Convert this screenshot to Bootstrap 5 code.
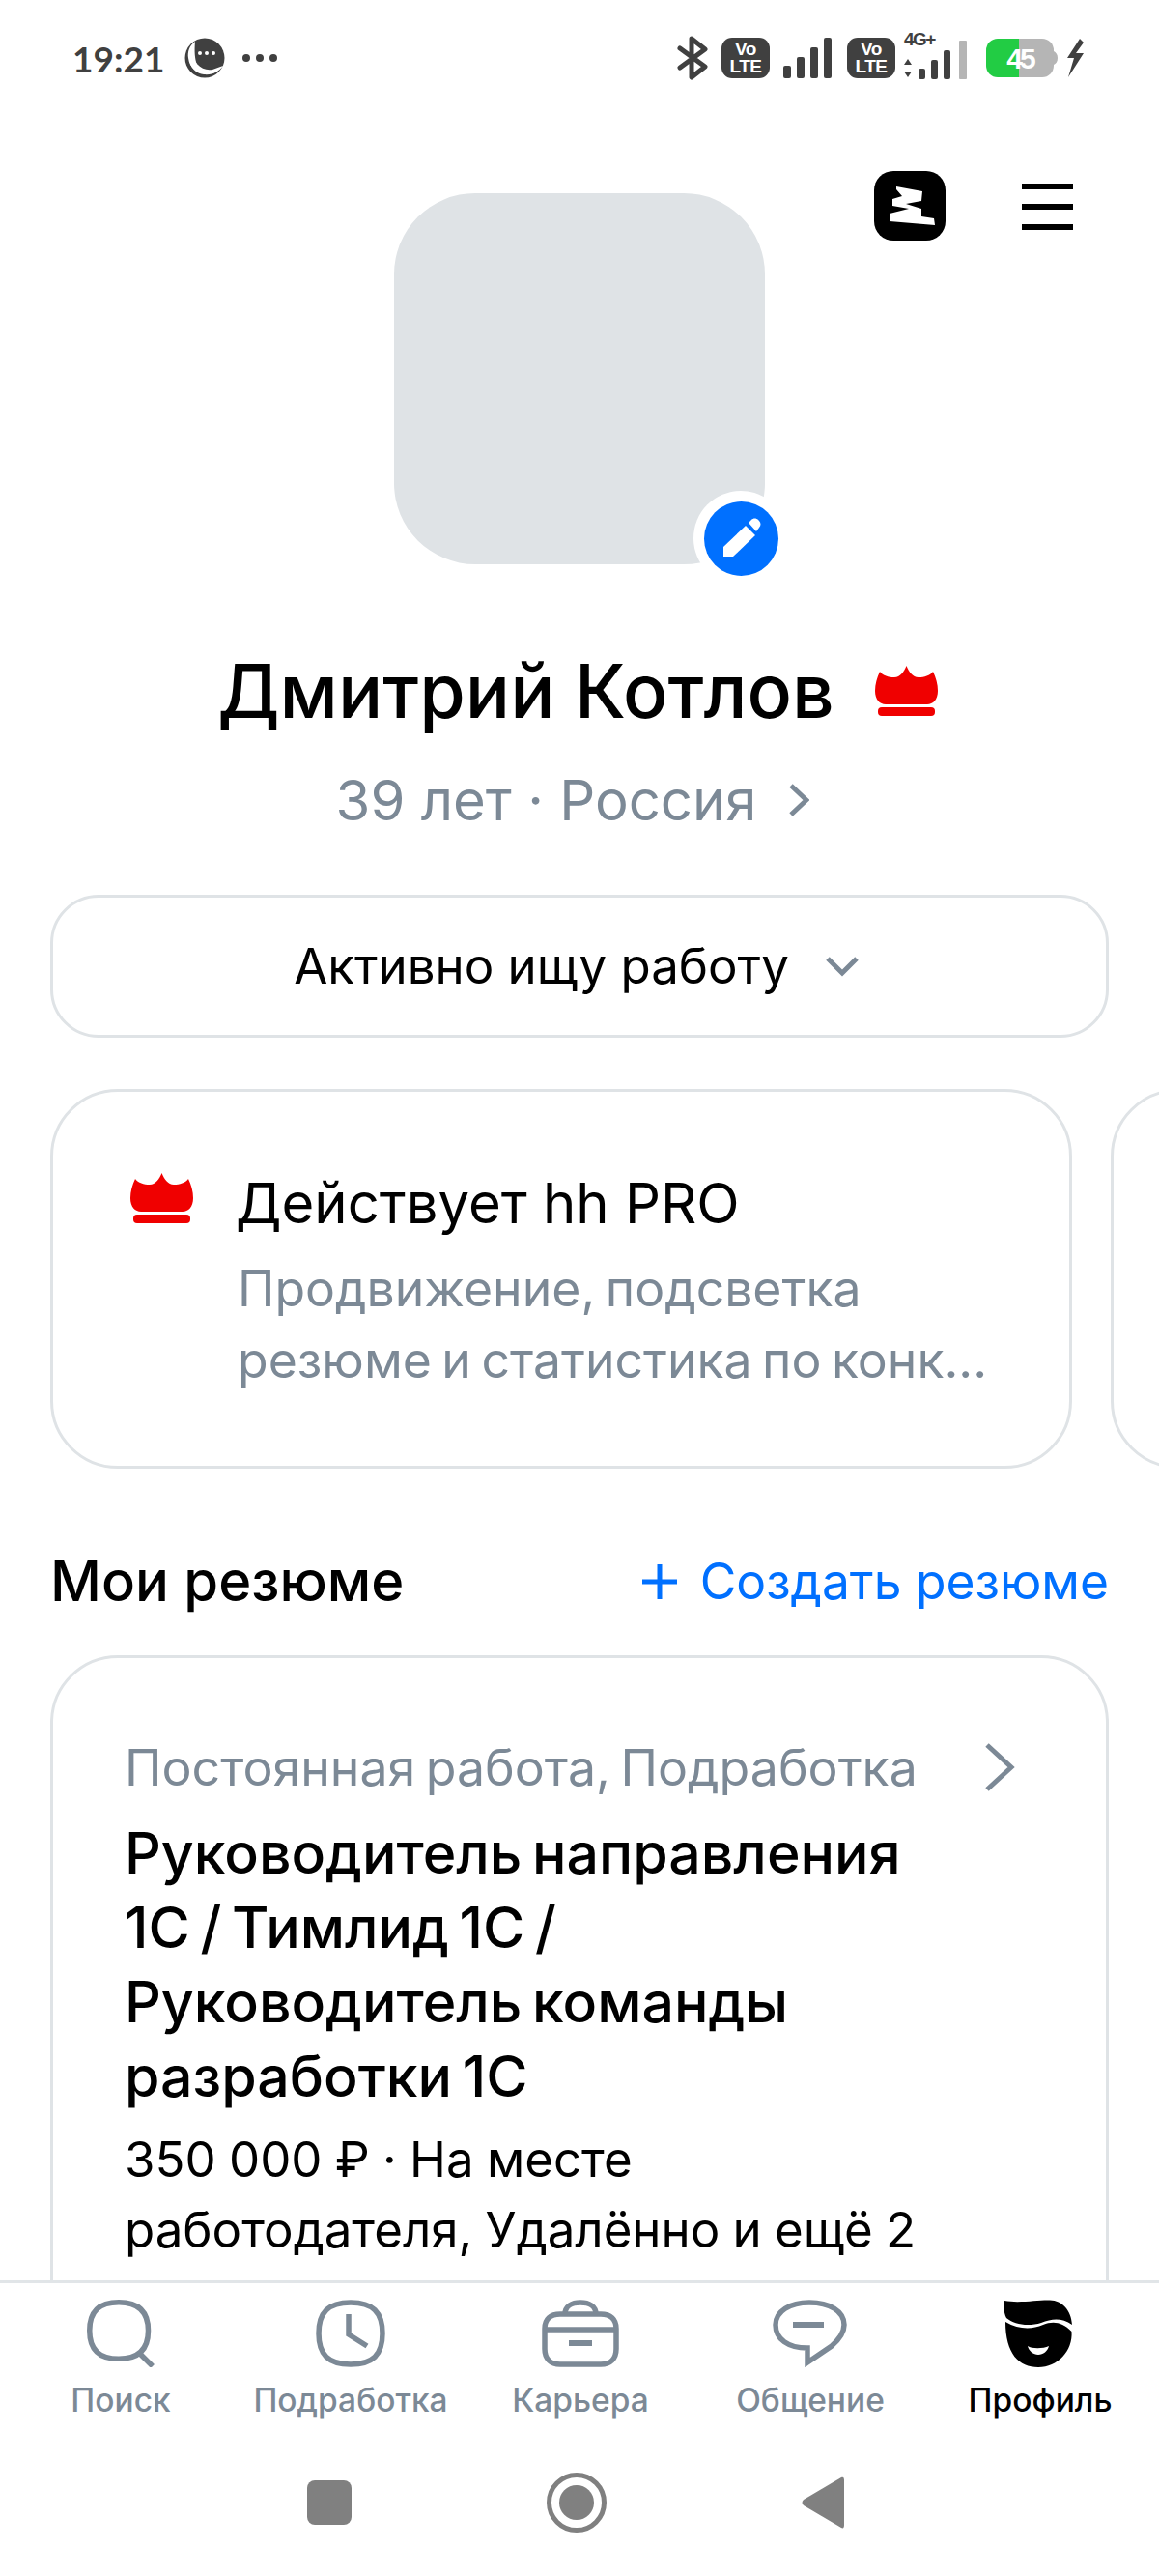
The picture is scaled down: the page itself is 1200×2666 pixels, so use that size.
<!DOCTYPE html>
<html lang="ru">
  <head>
    <meta charset="UTF-8" />
    <meta name="viewport" content="width=device-width, initial-scale=1.0" />
    <title>Профиль</title>
    <link
      rel="stylesheet"
      href="https://cdn.jsdelivr.net/npm/bootstrap@5.3.0/dist/css/bootstrap.min.css"
    />
    <style>
      body {
        height: 100vh;
        overflow: hidden;
        background: #fff;
        color: #000;
        font-family: Inter, "Noto Sans", sans-serif;
      }
      .status-bar {
        height: 120px;
        padding: 0 77px 0 75px;
        color: #404040;
      }
      .status-time {
        margin-right: 20px;
        font-family: Lato, sans-serif;
        font-weight: 700;
        font-size: 37px;
        line-height: 1;
      }
      .status-dots {
        gap: 6px;
        margin-left: 17px;
      }
      .status-dots i {
        width: 8px;
        height: 8px;
        border-radius: 50%;
        background: #404040;
      }
      .status-icons {
        gap: 14px;
      }
      .volte {
        width: 50px;
        height: 42px;
        border-radius: 11px;
        background: #404040;
        color: #fff;
        font-family: "Liberation Sans", sans-serif;
        font-weight: 700;
        font-size: 19px;
        line-height: 18px;
        letter-spacing: -0.5px;
        text-align: center;
        padding-top: 3px;
      }
      .net-wrap {
        width: 68px;
        height: 48px;
        margin-left: -5px;
      }
      .net-label {
        top: -5px;
        left: 0;
        font-family: "Liberation Sans", sans-serif;
        font-weight: 700;
        font-size: 19px;
        line-height: 1;
        letter-spacing: -1.5px;
      }
      .battery-wrap {
        margin-left: 3px;
      }
      .battery {
        width: 70px;
        height: 40px;
        border-radius: 12px;
        background: linear-gradient(90deg, #22cc44 0, #22cc44 34px, #b5b5b5 34px);
        color: #fff;
        font-family: "Liberation Sans", sans-serif;
        font-weight: 700;
        font-size: 30px;
        letter-spacing: -3px;
      }
      .bolt-icon {
        margin-left: -6px;
      }
      .profile-top {
        display: grid;
        grid-template-columns: 1fr 384px 1fr;
        padding-top: 57px;
      }
      .top-actions {
        gap: 79px;
        padding-right: 89px;
      }
      .burger {
        width: 53px;
        gap: 15px;
        margin-top: 13px;
      }
      .burger i {
        display: block;
        height: 6px;
        background: #000;
      }
      .photo-box {
        width: 384px;
        height: 384px;
        margin-top: 23px;
        border-radius: 84px;
        background: #dfe3e6;
      }
      .edit-ring {
        right: -24px;
        bottom: -22px;
        width: 98px;
        height: 98px;
        background: #fff;
      }
      .edit-dot {
        width: 77px;
        height: 77px;
        background: #0070ff;
      }
      .person-name {
        margin: 85px 0 0;
        padding-right: 4px;
        gap: 42px;
        font-size: 77px;
        font-weight: 500;
        line-height: 92px;
      }
      .person-sub {
        margin-top: 32px;
        padding-right: 14px;
        gap: 33px;
        color: #7c8996;
        font-size: 58px;
        line-height: 70px;
      }
      .state-btn {
        height: 148px;
        margin: 63px 52px 0;
        padding-right: 6px;
        gap: 37px;
        border: 3px solid #dfe3e6;
        border-radius: 50px;
        font-size: 51px;
      }
      .promo-row {
        gap: 40px;
        margin-top: 53px;
        padding-left: 52px;
      }
      .promo-box {
        flex: 0 0 1058px;
        height: 393px;
        padding: 84px 0 0 80px;
        gap: 44px;
        border: 3px solid #dfe3e6;
        border-radius: 70px;
      }
      .promo-title {
        font-size: 58px;
        line-height: 62px;
        margin-bottom: 20px;
      }
      .promo-text {
        margin-left: 2px;
        color: #7c8996;
        font-size: 51.700px;
        line-height: 74px;
        word-spacing: -4px;
        white-space: nowrap;
      }
      .resume-head {
        margin: 78px 52px 0;
      }
      .resume-head h2 {
        margin: 0;
        font-size: 58px;
        font-weight: 500;
      }
      .resume-add {
        gap: 24px;
        color: #0070ff;
        font-size: 51.500px;
        text-decoration: none;
      }
      .resume-box {
        margin: 38px 52px 0;
        height: 900px;
        padding: 83px 94px 0 74px;
        border: 3px solid #dfe3e6;
        border-radius: 70px;
      }
      .resume-kind {
        color: #7c8996;
        font-size: 51.800px;
        line-height: 60px;
        word-spacing: -4px;
      }
      .resume-title {
        margin: 20px 0 0;
        font-size: 59px;
        font-weight: 500;
        line-height: 77px;
        word-spacing: -5px;
      }
      .resume-meta {
        margin-top: 11px;
        font-size: 51px;
        line-height: 73px;
        word-spacing: -1px;
      }
      .tab-bar {
        height: 157px;
        padding: 17px 6px 0;
        border-top: 3px solid #e1e5e8;
        background: #fff;
      }
      .tab-item {
        flex: 0 0 238px;
        color: #7c8996;
        font-size: 33.500px;
        font-weight: 500;
        line-height: 40px;
        text-decoration: none;
      }
      .tab-item svg {
        margin-bottom: 14px;
      }
      .tab-item.is-on {
        color: #000;
      }
      .sys-nav {
        height: 149px;
        padding: 0 0 3px 318px;
        gap: 202px;
      }
    </style>
  </head>
  <body class="d-flex flex-column">
    <main class="flex-grow-1 overflow-hidden">
      <div class="status-bar d-flex align-items-center justify-content-between">
        <div class="d-flex align-items-center">
          <span class="status-time">19:21</span>
          <svg width="44" height="42" viewBox="0 0 44 42">
            <circle cx="22" cy="21" r="20.5" fill="#404040" />
            <path d="M8 11C3 22 7 36 21 38C30 39 37 35 41 29L30 33C19 35 9 26 8 11Z" fill="#fff" />
            <path d="M12 4C6 8 4 15 5 21C6 31 14 37 23 37C15 34 10 25 12 4Z" fill="#fff" />
            <circle cx="17" cy="16" r="2" fill="#fff" />
            <circle cx="24" cy="16" r="2" fill="#fff" />
            <circle cx="31" cy="16" r="2" fill="#fff" />
          </svg>
          <div class="status-dots d-flex">
            <i></i><i></i><i></i>
          </div>
        </div>
        <div class="status-icons d-flex align-items-center">
          <svg width="32" height="46" viewBox="0 0 32 46" fill="none" stroke="#404040" stroke-width="5" stroke-linecap="round" stroke-linejoin="round">
            <path d="M3 13L29 32L15 43V3L29 14L3 33" />
          </svg>
          <div class="volte">Vo<br />LTE</div>
          <svg width="52" height="42" viewBox="0 0 52 42" fill="#404040">
            <rect x="0" y="29" width="8" height="13" rx="2" />
            <rect x="14" y="20" width="8" height="22" rx="2" />
            <rect x="28" y="10" width="8" height="32" rx="2" />
            <rect x="42" y="0" width="8" height="42" rx="2" />
          </svg>
          <div class="volte">Vo<br />LTE</div>
          <div class="net-wrap position-relative">
            <span class="net-label position-absolute">4G+</span>
            <svg class="position-absolute bottom-0 start-0" width="68" height="42" viewBox="0 0 68 42" fill="#404040">
              <path d="M4 19L8 25H0Z" />
              <path d="M4 38L0 32H8Z" />
              <rect x="15" y="29" width="7" height="11" rx="2" />
              <rect x="28" y="20" width="7" height="20" rx="2" />
              <rect x="41" y="10" width="7" height="30" rx="2" />
              <rect x="57" y="0" width="8" height="40" rx="1" fill="#b5b5b5" />
            </svg>
          </div>
          <div class="battery-wrap d-flex align-items-center">
            <div class="battery d-flex align-items-center justify-content-center">45</div>
            <svg width="4" height="14" viewBox="0 0 4 14"><path d="M0 0C2 1 4 3 4 7C4 11 2 13 0 14Z" fill="#b5b5b5" /></svg>
          </div>
          <svg class="bolt-icon" width="20" height="40" viewBox="0 0 20 40" fill="#404040">
            <path d="M15 0L2 20H9L3 40L19 15H11L19 4Z" />
          </svg>
        </div>
      </div>

      <div class="profile-top">
        <div></div>
        <div class="photo-box position-relative">
          <div class="edit-ring position-absolute rounded-circle d-flex align-items-center justify-content-center">
            <div class="edit-dot rounded-circle">
              <svg width="77" height="77" viewBox="0 0 77 77" fill="#fff">
                <path d="M20 47L43 25L53 35L30 57H20Z" />
                <path d="M46 22L49 19C51 17 54 17 56 19L57 20C59 22 59 25 57 27L54 31Z" />
              </svg>
            </div>
          </div>
        </div>
        <div class="top-actions d-flex justify-content-end align-items-start">
          <svg width="74" height="72" viewBox="0 0 74 72">
            <rect width="74" height="72" rx="20" fill="#000" />
            <path d="M23 16L50 21L49 31L33 34L49 39V47L62 49L63 56L16 52V44L36 39L19 36V29L29 26L23 19Z" fill="#fff" />
          </svg>
          <div class="burger d-flex flex-column"><i></i><i></i><i></i></div>
        </div>
      </div>

      <h1 class="person-name d-flex justify-content-center align-items-center">
        Дмитрий Котлов
        <svg width="65" height="52" viewBox="0 0 65 52" fill="#f00000">
          <path d="M32.5 0C35 6 39 12 45 12C51 12 57 10 60 6C63 12 65 19 65 26C65 35 60 40 54 40H11C5 40 0 35 0 26C0 19 2 12 5 6C8 10 14 12 20 12C26 12 30 6 32.5 0Z" />
          <rect x="3" y="43" width="59" height="9" rx="4" />
        </svg>
      </h1>
      <div class="person-sub d-flex justify-content-center align-items-center">
        39 лет · Россия
        <svg width="22" height="36" viewBox="0 0 22 36" fill="none" stroke="#7c8996" stroke-width="5">
          <path d="M3 3L19 18L3 33" />
        </svg>
      </div>

      <div class="state-btn d-flex justify-content-center align-items-center">
        Активно ищу работу
        <svg width="36" height="22" viewBox="0 0 36 22" fill="none" stroke="#7c8996" stroke-width="5">
          <path d="M3 3L18 18L33 3" />
        </svg>
      </div>

      <div class="promo-row d-flex overflow-hidden">
        <div class="promo-box d-flex">
          <svg class="flex-shrink-0" width="65" height="52" viewBox="0 0 65 52" fill="#f00000">
            <path d="M32.5 0C35 6 39 12 45 12C51 12 57 10 60 6C63 12 65 19 65 26C65 35 60 40 54 40H11C5 40 0 35 0 26C0 19 2 12 5 6C8 10 14 12 20 12C26 12 30 6 32.5 0Z" />
            <rect x="3" y="43" width="59" height="9" rx="4" />
          </svg>
          <div>
            <div class="promo-title">Действует hh PRO</div>
            <div class="promo-text">Продвижение, подсветка<br />резюме и статистика по конк...</div>
          </div>
        </div>
        <div class="promo-box"></div>
      </div>

      <div class="resume-head d-flex justify-content-between align-items-center">
        <h2>Мои резюме</h2>
        <a class="resume-add d-flex align-items-center" href="#">
          <svg width="36" height="36" viewBox="0 0 36 36" fill="none" stroke="#0070ff" stroke-width="5">
            <path d="M18 0V36M0 18H36" />
          </svg>
          Создать резюме
        </a>
      </div>

      <div class="resume-box">
        <div class="d-flex justify-content-between align-items-center">
          <div class="resume-kind">Постоянная работа, Подработка</div>
          <svg width="32" height="52" viewBox="0 0 32 52" fill="none" stroke="#7c8996" stroke-width="5">
            <path d="M3 3L28 26L3 49" />
          </svg>
        </div>
        <h3 class="resume-title">Руководитель направления<br />1С / Тимлид 1С /<br />Руководитель команды<br />разработки 1С</h3>
        <div class="resume-meta">350 000 ₽ · На месте<br />работодателя, Удалённо и ещё 2</div>
      </div>
    </main>

    <nav class="tab-bar d-flex flex-shrink-0">
      <a class="tab-item d-flex flex-column align-items-center" href="#">
        <svg width="80" height="70" viewBox="0 0 80 70" fill="none" stroke="#7c8996" stroke-width="5.5">
          <path d="M38 2.750C58 2.750 68.500 12 68.500 32C68.500 52 58 61.250 38 61.250C18 61.250 7.750 52 7.750 32C7.750 12 18 2.750 38 2.750Z" />
          <path d="M59 55L73 69" />
        </svg>
        Поиск
      </a>
      <a class="tab-item d-flex flex-column align-items-center" href="#">
        <svg width="80" height="70" viewBox="0 0 80 70" fill="none" stroke="#7c8996" stroke-width="5.5">
          <path d="M40 3C63 3 73 13 73 35C73 57 63 67 40 67C17 67 7 57 7 35C7 13 17 3 40 3Z" />
          <path d="M38 15V36L57 48" />
        </svg>
        Подработка
      </a>
      <a class="tab-item d-flex flex-column align-items-center" href="#">
        <svg width="80" height="70" viewBox="0 0 80 70" fill="none" stroke="#7c8996" stroke-width="5.5">
          <path d="M24 15C24 7 31 3 40 3C49 3 56 7 56 15" />
          <path d="M3 30C3 20 9 15 19 15H61C71 15 77 20 77 30V51C77 61 71 67 61 67H19C9 67 3 61 3 51Z" />
          <path d="M3 31H77" />
          <path d="M28 45H52" stroke-width="6" />
        </svg>
        Карьера
      </a>
      <a class="tab-item d-flex flex-column align-items-center" href="#">
        <svg width="80" height="70" viewBox="0 0 80 70" fill="none" stroke="#7c8996" stroke-width="5.5">
          <path d="M39 3C60 3 75 12 75 26C75 34 70 41 62 48L37 65V50C17 50 4 41 4 26C4 12 19 3 39 3Z" />
          <path d="M22 26H54" stroke-width="6" />
        </svg>
        Общение
      </a>
      <a class="tab-item is-on d-flex flex-column align-items-center" href="#">
        <svg width="80" height="70" viewBox="7 9 80 70" fill="#000">
          <path d="M10 10C25 13 45 9 57 9.500C70 10 79 20 80 35C70 28 60 28 48 33C35 37 20 35 12 28C9 22 9 15 10 10Z" />
          <path d="M11 32C25 40 38 40 50 35C60 31 70 32 79.500 42C81 62 65 79 45 79C25 79 11 65 11 32Z" />
          <path d="M34 57C38 60 50 60 56 57C55 62 50 66 45 66C40 66 35 62 34 57Z" fill="#fff" />
        </svg>
        Профиль
      </a>
    </nav>

    <div class="sys-nav d-flex align-items-center flex-shrink-0">
      <svg width="46" height="46" viewBox="0 0 46 46"><rect width="46" height="46" rx="8" fill="#808080" /></svg>
      <svg width="62" height="62" viewBox="0 0 62 62" fill="#808080">
        <circle cx="31" cy="31" r="18" />
        <circle cx="31" cy="31" r="28.500" fill="none" stroke="#808080" stroke-width="5" />
      </svg>
      <svg width="44" height="54" viewBox="0 0 44 54" fill="#808080">
        <path d="M41 1C43 0 44 1 44 4V50C44 53 43 54 41 53L2 30C0 28 0 26 2 24Z" />
      </svg>
    </div>

    <script src="https://cdn.jsdelivr.net/npm/bootstrap@5.3.0/dist/js/bootstrap.bundle.min.js"></script>
  </body>
</html>
